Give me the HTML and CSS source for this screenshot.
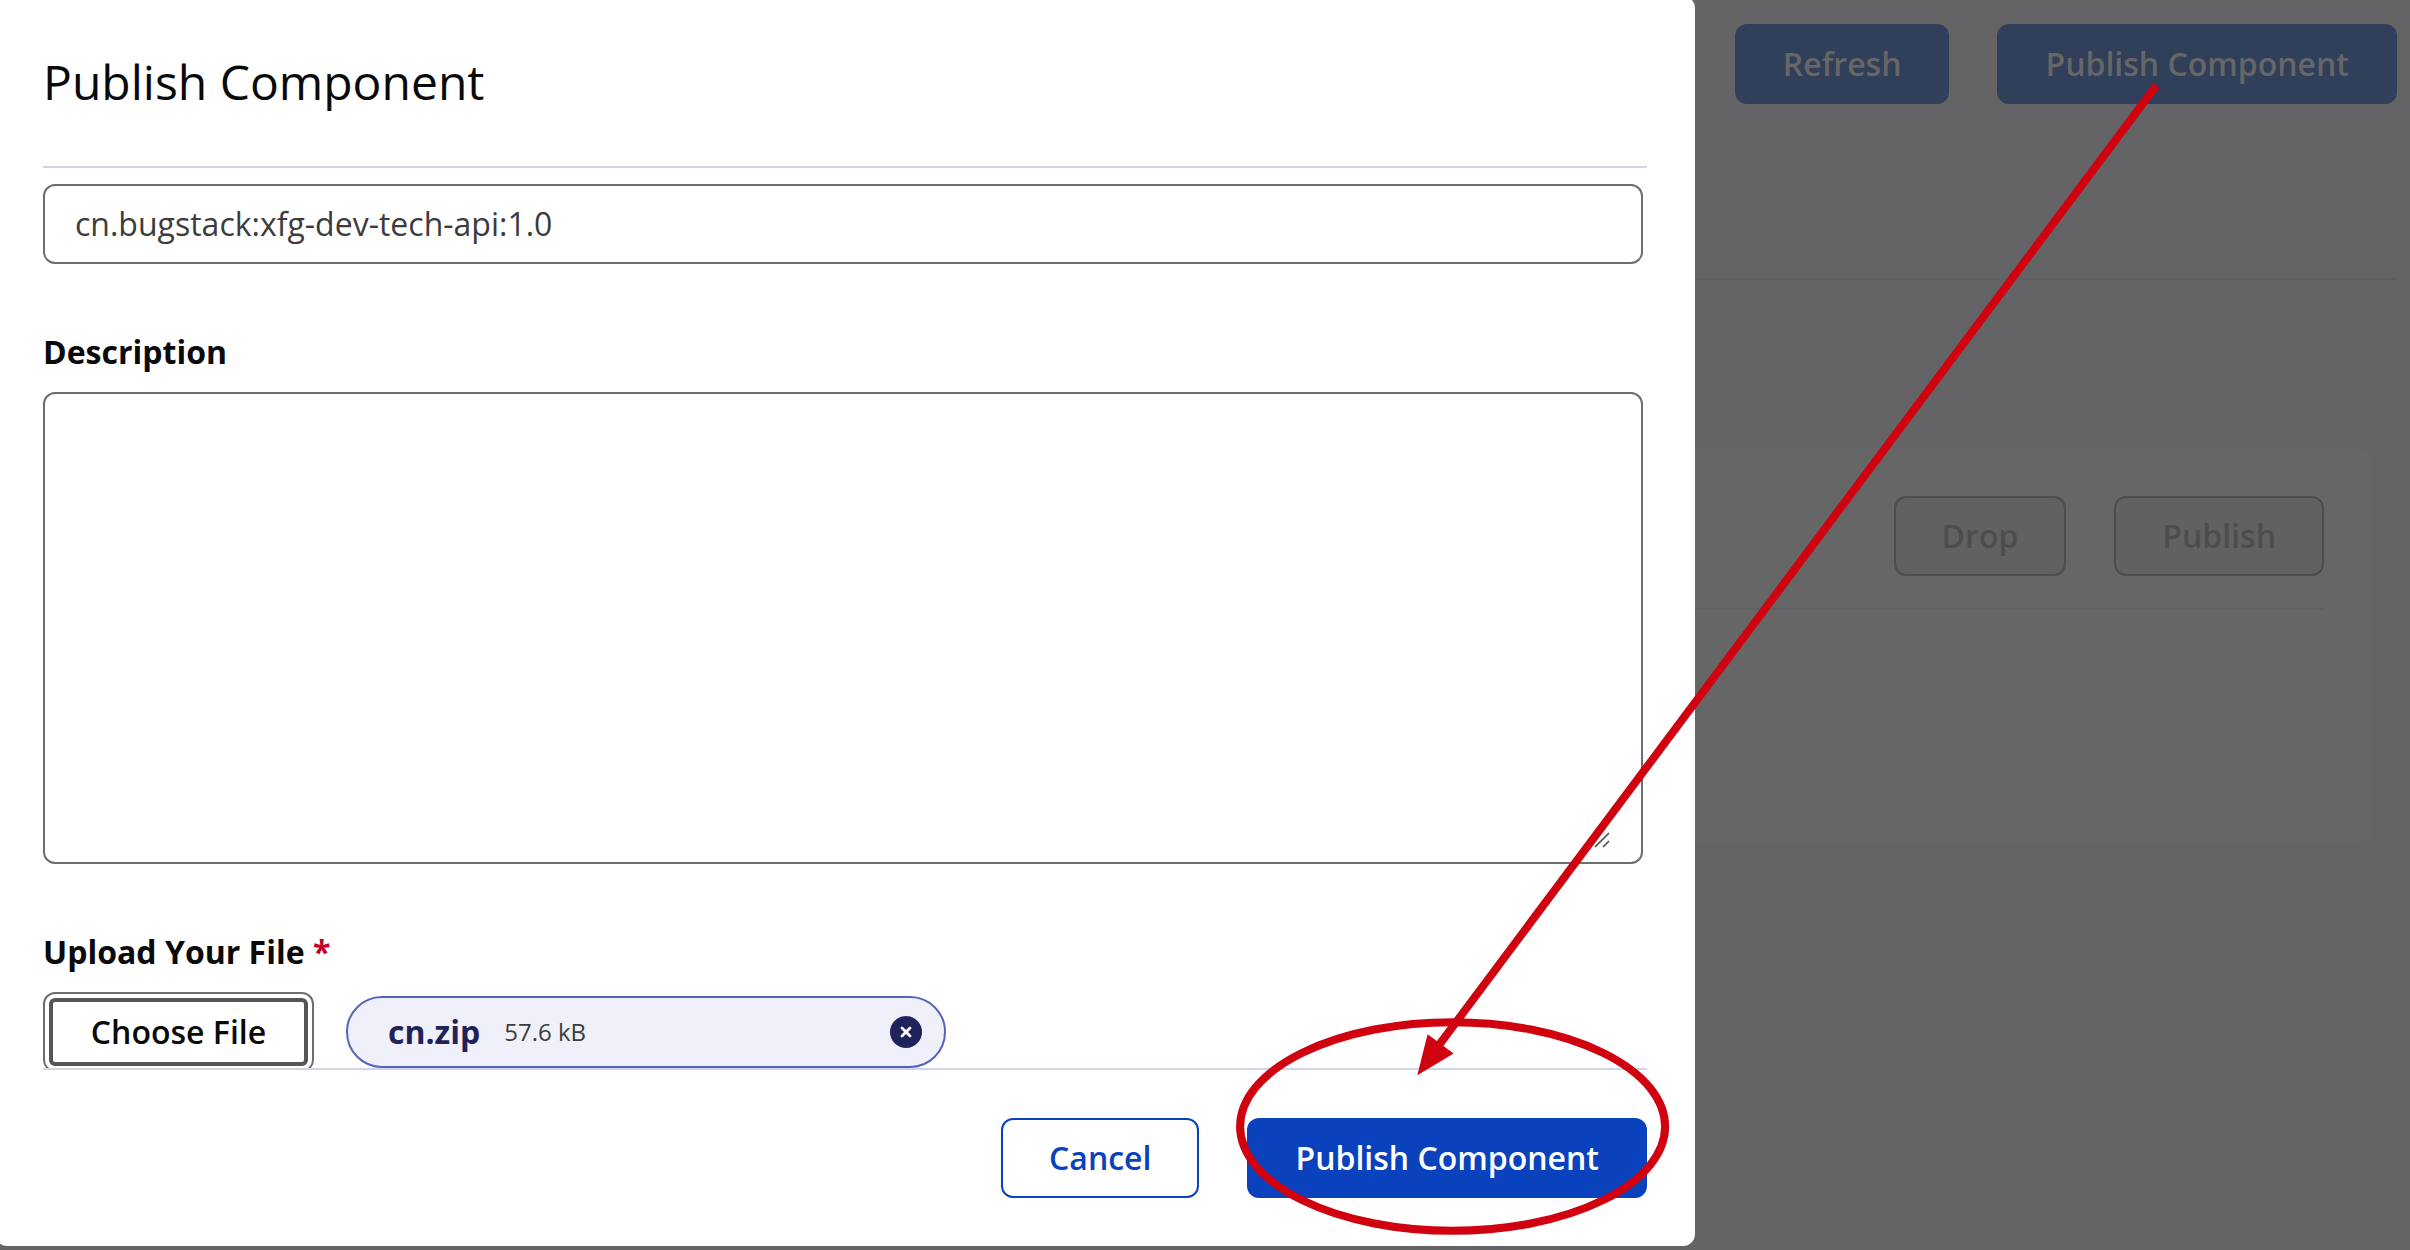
FILE: index.html
```html
<!DOCTYPE html>
<html lang="en">
<head>
<meta charset="utf-8">
<title>Publish Component</title>
<link rel="stylesheet" href="styles.css">
</head>
<body>
<main class="page">
  <header class="page-actions">
    <button class="btn btn-muted">Refresh</button>
    <button class="btn btn-muted">Publish Component</button>
  </header>
  <section class="card">
    <div class="card-actions">
      <button class="btn btn-disabled">Drop</button>
      <button class="btn btn-disabled">Publish</button>
    </div>
  </section>
</main>

<div class="modal" role="dialog">
  <h2 class="modal-title">Publish Component</h2>
  <div class="modal-body">
    <div class="input">cn.bugstack:xfg-dev-tech-api:1.0</div>
    <div class="label">Description</div>
    <div class="textarea">
      <svg class="grip" width="16" height="16" viewBox="0 0 16 16"><path d="M1 15 15 1M9 15l6-6" stroke="#4a4a4c" stroke-width="1.6"/></svg>
    </div>
    <div class="label label-upload">Upload Your File <span class="required">*</span></div>
    <div class="upload-row">
      <button class="choose"><span class="choose-inner">Choose File</span></button>
      <div class="chip">
        <span class="chip-name">cn.zip</span>
        <span class="chip-size">57.6 kB</span>
        <svg class="chip-close" width="32" height="32" viewBox="0 0 32 32"><circle cx="16" cy="16" r="16" fill="#1f2359"/><path d="M12 12l8 8M20 12l-8 8" stroke="#fff" stroke-width="2.8" stroke-linecap="round"/></svg>
      </div>
    </div>
  </div>
  <footer class="modal-footer">
    <button class="btn btn-outline">Cancel</button>
    <button class="btn btn-primary">Publish Component</button>
  </footer>
</div>

<svg class="annotation" width="2410" height="1250" viewBox="0 0 2410 1250">
  <ellipse cx="1452.6" cy="1126.5" rx="212.5" ry="104.3" fill="none" stroke="#d0020f" stroke-width="8"/>
  <path d="M2156.3 85.5 1439 1045" stroke="#d0020f" stroke-width="8"/>
  <path d="M1417.3 1075.3 1427.6 1034.2 1453.6 1053.4z" fill="#d0020f"/>
</svg>
</body>
</html>
```
FILE: styles.css
```css
* { box-sizing: border-box; }
body {
  margin: 0;
  width: 2410px;
  height: 1250px;
  overflow: hidden;
  position: relative;
  background: #646466;
  font-family: "Open Sans", "Noto Sans", sans-serif;
  font-size: 32px;
  color: #0a0a0b;
}
.btn {
  height: 80px;
  padding: 0 46px;
  border: 2px solid transparent;
  border-radius: 12px;
  font: 600 32px/76px "Open Sans", "Noto Sans", sans-serif;
  white-space: nowrap;
}
.page { padding: 24px 13px 0 0; }
.page-actions {
  display: flex;
  justify-content: flex-end;
  gap: 48px;
  height: 256px;
  border-bottom: 2px solid #5f5f63;
}
.btn-muted { background: #303f5a; color: #666; }
.card {
  height: 394px;
  margin: 168px 25px 0 0;
  padding: 48px 48px 0 0;
  border-radius: 12px;
  background: #666;
}
.card-actions {
  display: flex;
  justify-content: flex-end;
  gap: 48px;
  height: 114px;
  border-bottom: 2px solid #606068;
}
.btn-disabled { background: #616161; border-color: #4d4d4d; color: #4d4d4d; }

.modal {
  position: absolute;
  left: -5px;
  top: -4px;
  width: 1700px;
  height: 1250px;
  padding: 4px 48px 0 48px;
  border-radius: 12px;
  background: #fff;
}
.modal-title {
  margin: 0;
  height: 168px;
  padding-top: 49px;
  border-bottom: 2px solid #d1d3ea;
  font-size: 48px;
  font-weight: 400;
  line-height: 66px;
}
.modal-body {
  height: 902px;
  padding: 16px 4px 0 0;
  overflow: hidden;
  border-bottom: 2px solid #d1d3ea;
}
.input, .textarea {
  border: 2px solid #6e6e70;
  border-radius: 12px;
}
.input {
  height: 80px;
  padding-left: 30px;
  line-height: 76px;
  color: #3c3c3d;
}
.label {
  height: 128px;
  padding-top: 64px;
  font-weight: 700;
  line-height: 48px;
}
.textarea {
  display: flex;
  justify-content: flex-end;
  align-items: flex-end;
  height: 472px;
  padding: 0 31px 14px 0;
}
.required { color: #c1002b; }
.upload-row { display: flex; gap: 32px; }
.choose {
  width: 271px;
  height: 80px;
  padding: 4px;
  border: 2px solid #6e6e70;
  border-radius: 12px;
  background: #fff;
  color: #0a0a0b;
  font: 600 32px/60px "Open Sans", "Noto Sans", sans-serif;
}
.choose-inner {
  display: block;
  height: 68px;
  border: 4px solid #555556;
  border-radius: 6px;
}
.chip {
  display: flex;
  align-items: center;
  width: 600px;
  height: 72px;
  margin-top: 4px;
  padding: 0 22px 0 40px;
  border: 2px solid #5563bb;
  border-radius: 36px;
  background: #f0f0fa;
}
.chip-name { padding-bottom: 2px; font-weight: 700; color: #1f2359; }
.chip-size { margin-left: 24px; padding-bottom: 2px; font-size: 24px; color: #3c3c3d; }
.chip-close { margin-left: auto; }
.modal-footer {
  display: flex;
  justify-content: flex-end;
  gap: 48px;
  padding-top: 48px;
}
.btn-outline { background: #fff; border-color: #0a41bd; color: #0a41bd; }
.btn-primary { background: #0a41bd; color: #fff; }
.annotation { position: absolute; left: 0; top: 0; }
```
